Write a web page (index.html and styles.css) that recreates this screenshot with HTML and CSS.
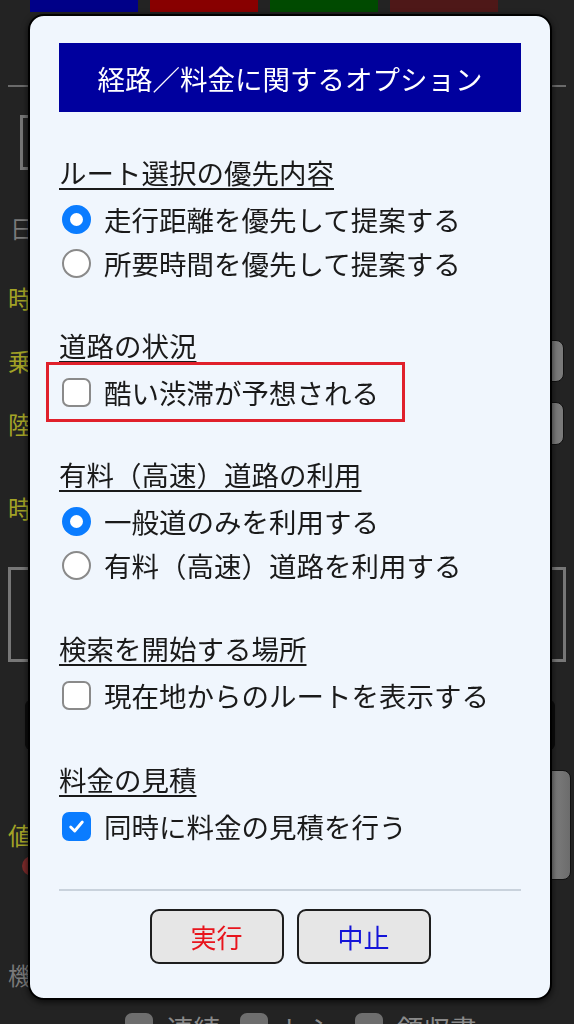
FILE: index.html
```html
<!DOCTYPE html>
<html lang="ja">
<head>
<meta charset="utf-8">
<title>経路／料金に関するオプション</title>
<link rel="stylesheet" href="styles.css">
</head>
<body>
<div class="page">
  <div class="topbar">
    <span class="tb tb-blue"></span>
    <span class="tb tb-red"></span>
    <span class="tb tb-green"></span>
    <span class="tb tb-maroon"></span>
  </div>
  <div class="divider"></div>
  <div class="inputbox"></div>
  <div class="brow r1"><span class="lbl grey">日</span></div>
  <div class="brow r2"><span class="lbl olive">時</span></div>
  <div class="brow r3"><span class="lbl olive">乗</span><span class="sidebtn"></span></div>
  <div class="brow r4"><span class="lbl olive">陸</span><span class="sidebtn"></span></div>
  <div class="brow r5"><span class="lbl olive">時</span></div>
  <div class="bigbox"></div>
  <div class="blackbox"></div>
  <div class="brow r6">
    <div class="leftcol"><span class="lbl olive">値</span><span class="reddot"></span></div>
    <span class="tallbtn"></span>
  </div>
  <div class="brow r7"><span class="lbl grey">機</span></div>
  <div class="bottomchecks">
    <span class="bcb"></span><span class="btxt">連続</span>
    <span class="bcb"></span><span class="btxt">レシ</span>
    <span class="bcb"></span><span class="btxt">領収書</span>
  </div>
</div>

<div class="modal">
  <div class="modal-title">経路／料金に関するオプション</div>

  <div class="section first">
    <div class="heading">ルート選択の優先内容</div>
    <div class="opt"><span class="radio on"></span><span>走行距離を優先して提案する</span></div>
    <div class="opt"><span class="radio"></span><span>所要時間を優先して提案する</span></div>
  </div>

  <div class="section">
    <div class="heading">道路の状況</div>
    <div class="opt marked"><span class="check"></span><span>酷い渋滞が予想される</span></div>
  </div>

  <div class="section">
    <div class="heading">有料（高速）道路の利用</div>
    <div class="opt"><span class="radio on"></span><span>一般道のみを利用する</span></div>
    <div class="opt"><span class="radio"></span><span>有料（高速）道路を利用する</span></div>
  </div>

  <div class="section s4">
    <div class="heading">検索を開始する場所</div>
    <div class="opt"><span class="check"></span><span>現在地からのルートを表示する</span></div>
  </div>

  <div class="section s5">
    <div class="heading">料金の見積</div>
    <div class="opt"><span class="check on"><svg viewBox="0 0 28 28" width="28" height="28"><path d="M7.5 14.5 L12 19 L20.5 9" fill="none" stroke="#fff" stroke-width="3.2" stroke-linecap="round" stroke-linejoin="round"/></svg></span><span>同時に料金の見積を行う</span></div>
  </div>

  <div class="rule"></div>
  <div class="actions">
    <button class="btn run">実行</button>
    <button class="btn stop">中止</button>
  </div>
</div>
</body>
</html>
```

FILE: styles.css
```css
* { box-sizing: border-box; }
html, body { margin: 0; padding: 0; }
body {
  background: #232323;
  font-family: "Noto Sans CJK JP", "Noto Sans", sans-serif;
  width: 574px;
  height: 1024px;
  overflow: hidden;
}

/* ---------- background page ---------- */
.page { display: flex; flex-direction: column; }
.topbar { display: flex; gap: 12px; padding-left: 30px; height: 12px; }
.tb { width: 108px; height: 12px; }
.tb-blue { background: #000088; }
.tb-red { background: #880000; }
.tb-green { background: #004a00; }
.tb-maroon { background: #4e1818; }
.divider { margin: 73px 8px 0; height: 2px; background: #6a6a6a; }
.inputbox { margin: 28px 34px 0 20px; height: 55px; border: 3px solid #777; }
.brow { display: flex; align-items: center; justify-content: space-between; padding-left: 8px; }
.lbl { font-size: 24px; line-height: 30px; }
.grey { color: #7a7a7a; }
.olive { color: #a3a326; }
.r1 { margin-top: 43px; height: 30px; padding-left: 10px; }
.r2 { margin-top: 40px; height: 30px; }
.r3 { margin-top: 27px; height: 42px; }
.r4 { margin-top: 20px; height: 43px; }
.r5 { margin-top: 48px; height: 30px; }
.sidebtn { width: 24px; height: 100%; background: #7a7a7a; border-radius: 8px; border: 1px solid #111; margin-right: 10px; }
.bigbox { margin: 44px 8px 0; height: 95px; border: 3px solid #777; }
.blackbox { margin: 38px 19px 0 25px; height: 50px; background: #0c0c0c; border-radius: 6px; }
.r6 { margin-top: 20px; height: 110px; align-items: stretch; }
.leftcol { display: flex; flex-direction: column; justify-content: flex-end; gap: 6px; padding-bottom: 4px; }
.reddot { width: 20px; height: 20px; border-radius: 50%; background: #7a2a2a; margin-left: 14px; }
.tallbtn { width: 30px; background: linear-gradient(90deg, #888, #6c6c6c); border-radius: 8px; margin-right: 3px; border: 1px solid #111; }
.r7 { margin-top: 80px; height: 30px; }
.bottomchecks { display: flex; align-items: center; margin-top: 22px; padding-left: 125px; height: 30px; }
.bcb { width: 28px; height: 28px; background: #6e6e6e; border-radius: 7px; margin-right: 14px; }
.btxt { color: #8a8a8a; font-size: 26.5px; margin-right: 20px; }

/* ---------- modal ---------- */
.modal {
  position: fixed;
  top: 14px;
  left: 28px;
  width: 524px;
  height: 986px;
  border: 2px solid #000;
  border-radius: 16px;
  background: #f0f6fd;
  box-shadow: 0 2px 6px rgba(0,0,0,0.7);
  padding: 27px 29px 0;
  display: flex;
  flex-direction: column;
  color: #1a1a1a;
}
.modal-title {
  height: 69px;
  background: #00009e;
  color: #fff;
  font-size: 27.5px;
  display: flex;
  align-items: center;
  justify-content: center;
}
.section { margin-top: 42px; display: flex; flex-direction: column; }
.section.s4 { margin-top: 43px; }
.section.s5 { margin-top: 44px; }
.heading {
  font-size: 27.5px;
  line-height: 36px;
  height: 36px;
  text-decoration: underline;
  text-decoration-thickness: 2px;
  text-underline-offset: 4px;
  margin-bottom: 7px;
}
.opt {
  display: flex;
  align-items: center;
  gap: 13px;
  height: 44px;
  font-size: 27.5px;
  padding-left: 3px;
}
.opt.marked { position: relative; align-self: flex-start; }
.opt.marked::after {
  content: "";
  position: absolute;
  top: -8px;
  bottom: -8px;
  left: -13px;
  right: -26px;
  border: 3px solid #e0202b;
}
.radio {
  width: 29px;
  height: 29px;
  flex: none;
  border-radius: 50%;
  border: 2px solid #8a8a8a;
  background: #fff;
}
.radio.on { border: 8px solid #0a7cff; }
.check {
  width: 29px;
  height: 29px;
  flex: none;
  border-radius: 7px;
  border: 2px solid #8a8a8a;
  background: #fff;
  display: flex;
  align-items: center;
  justify-content: center;
}
.check.on { background: #0a7cff; border-color: #0a7cff; }
.check.on svg { width: 25px; height: 25px; }
.rule { margin-top: 41px; height: 2px; background: #c9d2dc; }
.actions { display: flex; justify-content: center; gap: 13px; margin-top: 18px; }
.btn {
  width: 134px;
  height: 55px;
  background: #e6e6e6;
  border: 2px solid #1e1e1e;
  border-radius: 9px;
  font-family: "Noto Sans CJK JP", "Noto Sans", sans-serif;
  font-size: 26px;
  padding: 0;
}
.run { color: #e8141c; }
.stop { color: #1414d8; }
```
